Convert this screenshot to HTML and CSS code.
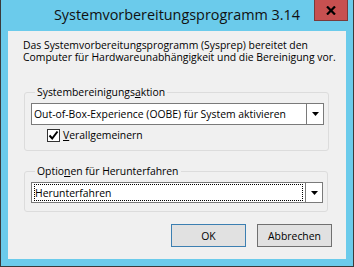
FILE: index.html
```html
<!DOCTYPE html>
<html lang="de">
<head>
<meta charset="utf-8">
<title>Systemvorbereitungsprogramm 3.14</title>
<link rel="stylesheet" href="styles.css">
</head>
<body>
<div class="window">
  <div class="titlebar">
    <div class="title-spacer"></div>
    <div class="title">Systemvorbereitungsprogramm 3.14</div>
    <div class="title-actions">
      <div class="close">
        <svg width="10" height="9" viewBox="0 0 10 9"><path d="M1 0.5 L9 8.5 M9 0.5 L1 8.5" stroke="#000" stroke-width="2.2" fill="none"/></svg>
      </div>
    </div>
  </div>
  <div class="client">
    <p class="desc"><span class="desc-line">Das Systemvorbereitungsprogramm (Sysprep) bereitet den</span><span class="desc-line">Computer für Hardwareunabhängigkeit und die Bereinigung vor.</span></p>
    <fieldset class="group group-action">
      <legend>Systembereinigungs<u>a</u>ktion</legend>
      <div class="combo">
        <span class="combo-text">Out-of-Box-Experience (OOBE) für System aktivieren</span>
        <span class="combo-btn"><svg width="7" height="4" viewBox="0 0 7 4"><path d="M0 0 H7 L3.5 4 Z" fill="#000"/></svg></span>
      </div>
      <div class="check">
        <span class="box"><svg width="11" height="11" viewBox="0 0 11 11"><path d="M1.5 5.5 L4.2 8.5 L9.5 1.5" stroke="#000" stroke-width="2" fill="none"/></svg></span>
        <span class="check-label"><u>V</u>erallgemeinern</span>
      </div>
    </fieldset>
    <fieldset class="group group-shutdown">
      <legend>Optio<u>n</u>en für Herunterfahren</legend>
      <div class="combo">
        <span class="combo-text"><span class="focus">Herunterfahren</span></span>
        <span class="combo-btn"><svg width="7" height="4" viewBox="0 0 7 4"><path d="M0 0 H7 L3.5 4 Z" fill="#000"/></svg></span>
      </div>
    </fieldset>
    <div class="buttons">
      <div class="btn btn-default">OK</div>
      <div class="btn">Abbrechen</div>
    </div>
  </div>
</div>
</body>
</html>
```

FILE: styles.css
```css
html, body {
  margin: 0;
  padding: 0;
  background: #6bcbeb;
}
.window {
  width: 354px;
  height: 267px;
  box-sizing: border-box;
  background: #6bcbeb;
  border-left: 1px solid #3a3a3a;
  border-right: 1px solid #3a3a3a;
  border-bottom: 1px solid #3a3a3a;
  display: flex;
  flex-direction: column;
  font-family: "Open Sans", "Liberation Sans", sans-serif;
  color: #000;
}
.titlebar {
  height: 31px;
  display: grid;
  grid-template-columns: 1fr auto 1fr;
  align-items: start;
}
.title {
  font-size: 14.4px;
  line-height: 20px;
  padding-top: 5px;
  color: #111;
  white-space: nowrap;
}
.title-actions {
  display: flex;
  justify-content: flex-end;
  padding-right: 5px;
}
.close {
  width: 34px;
  height: 21px;
  box-sizing: border-box;
  background: #c75050;
  border: 1px solid #7a3a3a;
  border-top: none;
  display: flex;
  align-items: center;
  justify-content: center;
}
.client {
  flex: 1;
  margin: 0 7px 7px 7px;
  background: #f0f0f0;
  font-size: 10.4px;
  display: flex;
  flex-direction: column;
}
.desc {
  margin: 8px 0 0 15px;
  white-space: nowrap;
  display: flex;
  flex-direction: column;
}
.desc-line {
  display: block;
  height: 12px;
  line-height: 12px;
}
.group {
  margin: 0;
  padding: 0;
  border: 1px solid #dcdcdc;
  border-radius: 3px;
  min-width: 0;
}
.group legend {
  padding: 0 2px;
  margin-left: 4px;
  line-height: 15px;
  white-space: nowrap;
}
.group-action {
  margin: 22px 17px 0 16px;
  height: 66px;
  box-sizing: border-box;
  padding: 3px 4px 0 6px;
}
.group-shutdown {
  margin: 13px 18px 0 16px;
  height: 48px;
  box-sizing: border-box;
  padding: 3px 4px 0 6px;
}
.combo {
  height: 22px;
  box-sizing: border-box;
  border: 1px solid #7a7a7a;
  background: #fff;
  display: flex;
}
.group-shutdown .combo {
  height: 21px;
}
.combo-text {
  flex: 1;
  padding: 1px 2px;
  display: flex;
  align-items: center;
  white-space: nowrap;
}
.focus {
  flex: 1;
  align-self: stretch;
  display: flex;
  align-items: center;
  outline: 1px dotted #000;
  outline-offset: -1px;
  padding-left: 1px;
}
.combo-btn {
  width: 16px;
  border-left: 1px solid #7a7a7a;
  display: flex;
  align-items: center;
  justify-content: center;
}
.check {
  display: flex;
  align-items: center;
  margin: 3px 0 0 16px;
  gap: 3px;
}
.box {
  width: 13px;
  height: 13px;
  box-sizing: border-box;
  border: 1px solid #333;
  background: #fff;
  display: flex;
  align-items: center;
  justify-content: center;
}
.buttons {
  display: flex;
  justify-content: flex-end;
  gap: 11px;
  margin: 12px 14px 0 0;
}
.btn {
  width: 75px;
  height: 23px;
  box-sizing: border-box;
  border: 1px solid #707070;
  background: #e1e1e1;
  display: flex;
  align-items: center;
  justify-content: center;
}
.btn-default {
  border-color: #3c7fb1;
}
```
